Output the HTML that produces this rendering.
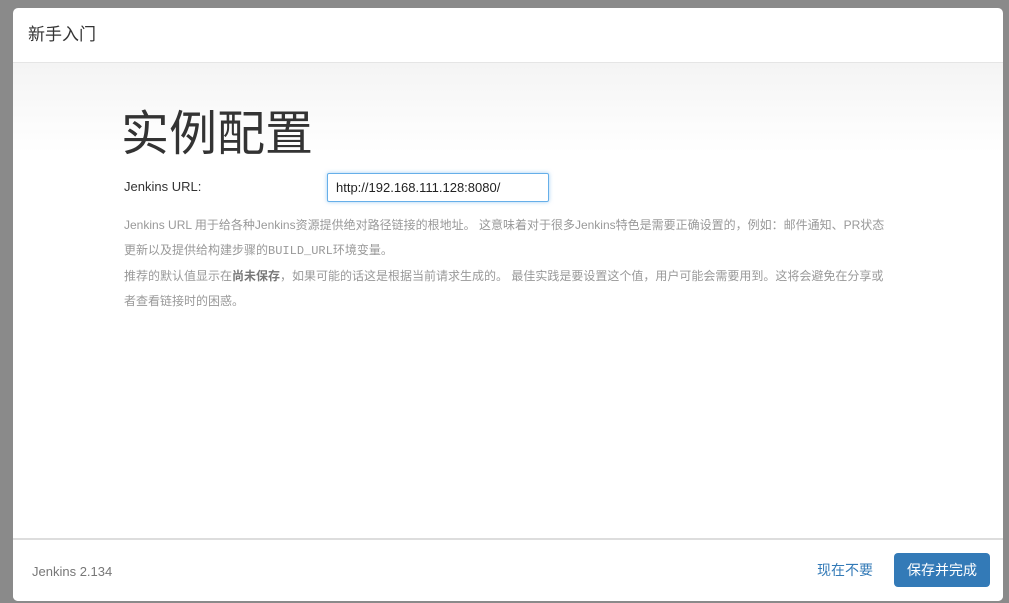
<!DOCTYPE html>
<html><head><meta charset="utf-8"><style>
body{margin:0;width:1009px;height:603px;background:#8a8a8a;overflow:hidden;font-family:"Liberation Sans","Noto Sans CJK SC",sans-serif;position:relative}
.dlg{position:absolute;left:13px;top:8px;width:990px;height:593px;background:#fff;border-radius:5px;overflow:hidden}
.hd{height:54px;border-bottom:1px solid #e5e5e5;font-size:17px;color:#333;line-height:54px;padding-left:15px}
.bd{position:absolute;top:55px;left:0;right:0;height:475px;background:linear-gradient(to bottom,#f4f4f4,#fff 90px)}
h1{position:absolute;left:108px;top:42px;margin:0;font-size:48px;font-weight:normal;color:#333;line-height:60px}
.lbl{position:absolute;left:111px;top:116px;font-size:13px;color:#333}
.inp{position:absolute;left:314px;top:110px;width:222px;height:29px;border:1px solid #66afe9;border-radius:2px;box-shadow:0 0 4px rgba(102,175,233,.6);font-size:13px;line-height:28px;padding-left:8px;box-sizing:border-box;color:#222}
.help{position:absolute;left:111px;top:150px;width:770px;font-size:12px;color:#999;line-height:25px}
.help b{color:#777;font-weight:bold}
.ft{position:absolute;top:530px;left:0;right:0;height:63px;border-top:2px solid #ddd;background:#fff}
.ver{position:absolute;left:19px;top:24px;font-size:13px;color:#777}
.skip{position:absolute;left:804px;top:20px;font-size:14px;color:#337ab7}
.btn{position:absolute;left:881px;top:13px;width:96px;height:34px;background:#337ab7;border-radius:4px;color:#fff;font-size:14px;line-height:34px;text-align:center}
</style></head><body>
<div class="dlg">
<div class="hd">新手入门</div>
<div class="bd">
<h1>实例配置</h1>
<div class="lbl">Jenkins URL:</div>
<div class="inp">http://192.168.111.128:8080/</div>
<div class="help">Jenkins URL 用于给各种Jenkins资源提供绝对路径链接的根地址。 这意味着对于很多Jenkins特色是需要正确设置的，例如：邮件通知、PR状态<br>更新以及提供给构建步骤的<span style="font-family:'Liberation Mono',monospace">BUILD_URL</span>环境变量。<br>推荐的默认值显示在<b>尚未保存</b>，如果可能的话这是根据当前请求生成的。 最佳实践是要设置这个值，用户可能会需要用到。这将会避免在分享或<br>者查看链接时的困惑。</div>
</div>
<div class="ft"><div class="ver">Jenkins 2.134</div><div class="skip">现在不要</div><div class="btn">保存并完成</div></div>
</div>
</body></html>
